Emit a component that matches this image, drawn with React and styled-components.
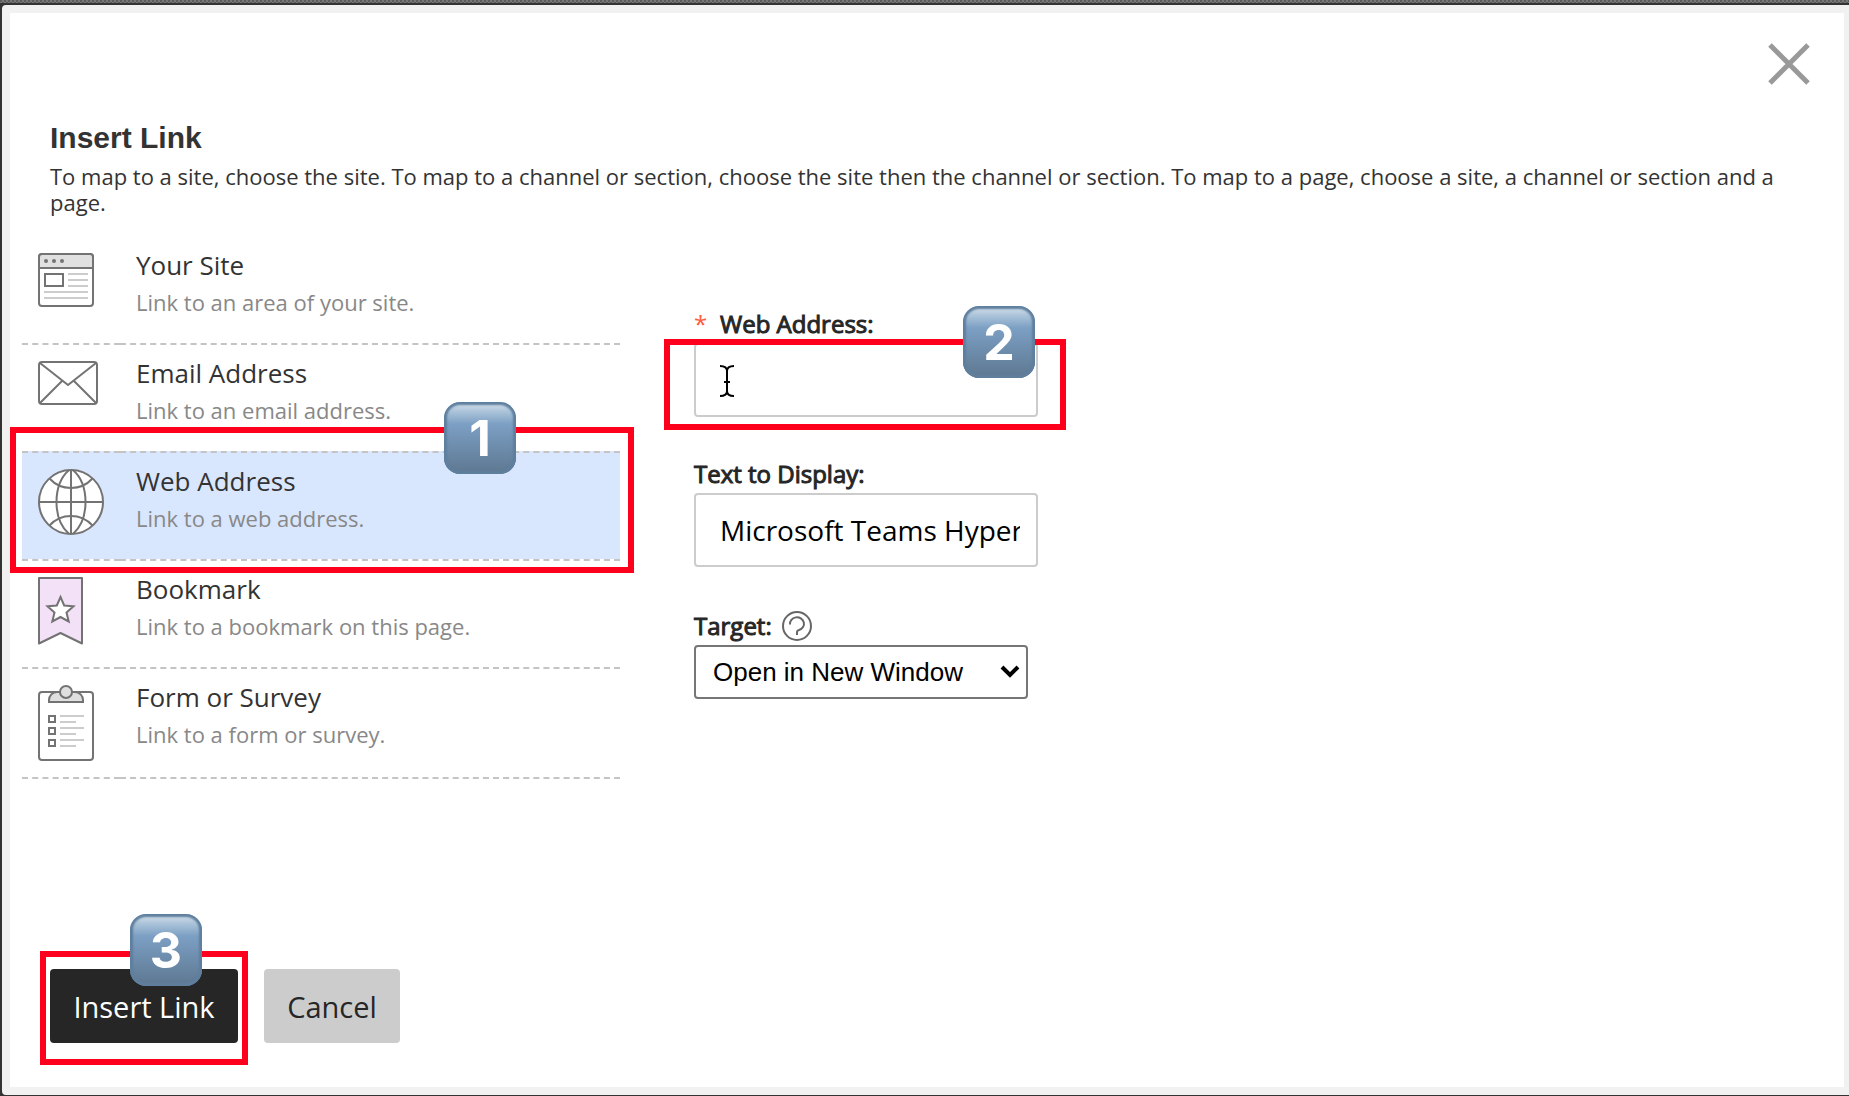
import React, { useState } from 'react';
import styled, { createGlobalStyle } from 'styled-components';

const GlobalStyle = createGlobalStyle`
  * {
    box-sizing: border-box;
  }

  body {
    margin: 0;
    background-color: #333;
    font-family: 'Open Sans', 'Liberation Sans', sans-serif;
    color: #333;
  }

  button,
  input {
    font-family: inherit;
  }
`;

const Page = styled.div`
  display: flex;
  flex-direction: column;
  min-height: 100vh;
  padding: 0 0 1px 2px;
`;

const Backdrop = styled.div`
  height: 3px;
  margin: 0 0 2px -2px;
  background: repeating-conic-gradient(#777 0 25%, #5c5c5c 0 50%) 0 0 / 4px 4px;
`;

const Dialog = styled.section`
  flex: 1;
  display: flex;
  flex-direction: column;
  border: solid #f1f1f1;
  border-width: 8px 5px 8px 8px;
  border-radius: 4px 0 0 4px;
  background: #fff;
`;

const Header = styled.header`
  display: flex;
  flex-direction: column;
  padding: 30px 34px 0 40px;
`;

const CloseButton = styled.button`
  align-self: flex-end;
  display: flex;
  padding: 0;
  border: 0;
  background: none;
  cursor: pointer;
`;

const Title = styled.h1`
  margin: 35px 0 7px;
  font-family: 'Liberation Sans', Arial, sans-serif;
  font-size: 30px;
  line-height: 36px;
  font-weight: 700;
`;

const Description = styled.p`
  margin: 0;
  font-size: 22px;
  line-height: 26px;
`;

const Content = styled.div`
  display: grid;
  grid-template-columns: 598px 344px;
  column-gap: 74px;
  padding: 20px 12px 0;
`;

const LinkTypes = styled.ul`
  margin: 0;
  padding: 0;
  list-style: none;
`;

const LinkTypeItem = styled.li`
  position: relative;
`;

const LinkTypeButton = styled.button`
  display: grid;
  grid-template-columns: 98px 1fr;
  width: 100%;
  min-height: 108px;
  padding: 0;
  border: 0;
  color: inherit;
  text-align: left;
  cursor: pointer;
  background: ${props => (props.$selected ? '#d9e7fe' : 'transparent')};
`;

const Cell = styled.span`
  display: flex;
  flex-direction: column;
  border-top: 2px dashed ${props => (props.$first ? 'transparent' : '#c4c4c4')};
  border-bottom: ${props => (props.$last ? '2px dashed #c4c4c4' : '0')};
`;

const IconCell = styled(Cell)`
  padding: 16px;

  svg {
    flex: none;
  }
`;

const TextCell = styled(Cell)`
  gap: 4px;
  padding: 10px 16px;
`;

const ItemTitle = styled.span`
  font-size: 26px;
  line-height: 36px;
`;

const ItemText = styled.span`
  font-size: 22px;
  line-height: 30px;
  color: #888;
`;

const Form = styled.form`
  display: flex;
  flex-direction: column;
  align-items: flex-start;
  gap: 40px;
  padding-top: 72px;
`;

const Field = styled.div`
  position: relative;
  display: flex;
  flex-direction: column;
  align-items: flex-start;
  gap: 2px;
  width: 100%;
`;

const LabelRow = styled.div`
  display: flex;
  align-items: flex-end;
  gap: 10px;
  min-height: ${props => (props.$tall ? '36px' : '34px')};
`;

const Label = styled.label`
  font-size: 24px;
  line-height: 34px;
  color: #262626;
  -webkit-text-stroke: 1px #262626;
`;

const Required = styled.span`
  width: 16px;
  font-size: 24px;
  line-height: 34px;
  color: #ff5a3c;
`;

const TextInput = styled.input`
  width: 100%;
  height: 74px;
  padding: 0 16px 0 24px;
  border: 2px solid #ccc;
  border-radius: 4px;
  background: #fff;
  color: #000;
  font-size: 28px;
`;

const HelpButton = styled.button`
  display: flex;
  padding: 0 0 2px;
  border: 0;
  background: none;
`;

const SelectWrap = styled.div`
  position: relative;
`;

const Select = styled.select`
  width: 334px;
  height: 54px;
  padding: 0 48px 0 17px;
  border: 2px solid #767676;
  border-radius: 4px;
  appearance: none;
  background: #fff;
  color: #000;
  font-family: 'Liberation Sans', Arial, sans-serif;
  font-size: 26px;
`;

const Chevron = styled.svg`
  position: absolute;
  top: 20px;
  right: 8px;
  pointer-events: none;
`;

const Pointer = styled.svg`
  position: absolute;
  top: 57px;
  left: 25px;
`;

const Footer = styled.footer`
  display: flex;
  gap: 26px;
  margin-top: auto;
  padding: 40px 40px 44px;
`;

const ButtonWrap = styled.div`
  position: relative;
`;

const Button = styled.button`
  height: 74px;
  min-width: ${props => (props.$primary ? '188px' : '136px')};
  padding: 0 20px;
  border: 0;
  border-radius: 4px;
  background: ${props => (props.$primary ? '#262626' : '#ccc')};
  color: ${props => (props.$primary ? '#fff' : '#262626')};
  font-size: 29px;
  cursor: pointer;
`;

const Highlight = styled.div`
  position: absolute;
  z-index: 1;
  inset: ${props => props.$inset};
  border: 6px solid #ff001c;
  pointer-events: none;
`;

const Badge = styled.span`
  position: absolute;
  top: ${props => props.$top};
  left: ${props => props.$left};
  display: flex;
  align-items: center;
  justify-content: center;
  width: 72px;
  height: 72px;
  border-radius: 16px;
  background: linear-gradient(#c9d9e6 3px, #a9c2d8 10px, #7c9fc4 22px, #5d7790);
  box-shadow: inset 0 0 2px 3px #5f7f9e;
  color: #fff;
  font-family: Inter, 'Liberation Sans', sans-serif;
  font-size: 50px;
  line-height: 72px;
  font-weight: 700;
`;

const Callout = ({ number, inset, top, left }) => (
  <Highlight $inset={inset}>
    <Badge $top={top} $left={left}>
      {number}
    </Badge>
  </Highlight>
);

const stroke = { fill: 'none', stroke: '#737373', strokeWidth: 2 };

const SiteIcon = () => (
  <svg width="56" height="54" {...stroke}>
    <rect x="1" y="1" width="54" height="52" rx="3" fill="#fff" />
    <path d="M1 15V4a3 3 0 0 1 3-3h48a3 3 0 0 1 3 3v11z" fill="#e0e0e0" />
    <g fill="#737373" stroke="none">
      <circle cx="8" cy="8" r="2" />
      <circle cx="16" cy="8" r="2" />
      <circle cx="24" cy="8" r="2" />
    </g>
    <path d="M30 21h20M30 27h20M30 33h20M6 39h44M6 45h44" stroke="#ccc" />
    <rect x="7" y="21" width="18" height="12" />
  </svg>
);

const EmailIcon = () => (
  <svg width="60" height="44" {...stroke}>
    <rect x="1" y="1" width="58" height="42" rx="3" fill="#fff" />
    <path d="M2 2l28 22L58 2M24 20L2 42M36 20l22 22" />
  </svg>
);

const GlobeIcon = () => (
  <svg width="66" height="66" {...stroke}>
    <circle cx="33" cy="33" r="32" fill="#fff" />
    <path d="M33 1v64M1 33h64" />
    <path d="M31 1C22 9 18.500 20 18.500 33S22 57 31 65M35 1c9 8 12.500 19 12.500 32S44 57 35 65" />
    <path d="M11.500 9.500C17 15.500 24 19 33 19s16-3.500 21.500-9.500M11.500 56.500C17 50.500 24 47 33 47s16 3.500 21.500 9.500" />
  </svg>
);

const BookmarkIcon = () => (
  <svg width="45" height="68" strokeLinejoin="round" {...stroke}>
    <path d="M1 1h43v65.500L22.500 56 1 66.500z" fill="#f3e1f8" />
    <path
      d="M22.500 20l3.700 8.500 9.300.8-7 6.200 2.200 9-8.200-4.500-8.200 4.500 2.200-9-7-6.200 9.300-.8z"
      fill="#fff"
      strokeLinejoin="miter"
    />
  </svg>
);

const FormIcon = () => (
  <svg width="56" height="76" {...stroke}>
    <rect x="1" y="7" width="54" height="68" rx="3" fill="#fff" />
    <path d="M11 17v-2a8 8 0 0 1 8-8h18a8 8 0 0 1 8 8v2z" fill="#e0e0e0" />
    <circle cx="28" cy="7" r="6" fill="#e0e0e0" />
    <path d="M11 31h6v6h-6zM11 43h6v6h-6zM11 55h6v6h-6z" />
    <path
      d="M22 31h24M22 37h16M22 43h24M22 49h16M22 55h24M22 61h16"
      stroke="#ccc"
    />
  </svg>
);

const linkTypes = [
  {
    id: 'site',
    title: 'Your Site',
    text: 'Link to an area of your site.',
    Icon: SiteIcon
  },
  {
    id: 'email',
    title: 'Email Address',
    text: 'Link to an email address.',
    Icon: EmailIcon
  },
  {
    id: 'web',
    title: 'Web Address',
    text: 'Link to a web address.',
    Icon: GlobeIcon
  },
  {
    id: 'bookmark',
    title: 'Bookmark',
    text: 'Link to a bookmark on this page.',
    Icon: BookmarkIcon
  },
  {
    id: 'form',
    title: 'Form or Survey',
    text: 'Link to a form or survey.',
    Icon: FormIcon
  }
];

const App = () => {
  const [selected, setSelected] = useState('web');
  const [address, setAddress] = useState('');
  const [text, setText] = useState('Microsoft Teams Hyperlink');

  return (
    <Page>
      <GlobalStyle />
      <Backdrop />
      <Dialog role="dialog" aria-labelledby="dialog-title">
        <Header>
          <CloseButton type="button" aria-label="Close">
            <svg width="42" height="42" stroke="#999" strokeWidth="5">
              <path d="M2 2l38 38M40 2L2 40" />
            </svg>
          </CloseButton>
          <Title id="dialog-title">Insert Link</Title>
          <Description>
            To map to a site, choose the site. To map to a channel or section,
            choose the site then the channel or section. To map to a page,
            choose a site, a channel or section and a page.
          </Description>
        </Header>
        <Content>
          <LinkTypes>
            {linkTypes.map(({ id, title, text: hint, Icon }, i) => {
              const edges = {
                $first: i === 0,
                $last: i === linkTypes.length - 1
              };
              return (
                <LinkTypeItem key={id}>
                  <LinkTypeButton
                    type="button"
                    $selected={id === selected}
                    aria-pressed={id === selected}
                    onClick={() => setSelected(id)}
                  >
                    <IconCell {...edges}>
                      <Icon />
                    </IconCell>
                    <TextCell {...edges}>
                      <ItemTitle>{title}</ItemTitle>
                      <ItemText>{hint}</ItemText>
                    </TextCell>
                  </LinkTypeButton>
                  {id === 'web' && (
                    <Callout
                      number="1"
                      inset="-24px -14px -14px -12px"
                      top="-31px"
                      left="428px"
                    />
                  )}
                </LinkTypeItem>
              );
            })}
          </LinkTypes>
          <Form id="link-form" onSubmit={e => e.preventDefault()}>
            <Field>
              <LabelRow>
                <Required aria-hidden="true">*</Required>
                <Label htmlFor="address">Web Address:</Label>
              </LabelRow>
              <TextInput
                id="address"
                required
                value={address}
                onChange={e => setAddress(e.target.value)}
              />
              <Pointer width="16" height="34" fill="none" stroke="#000" strokeWidth="2">
                <path d="M1 2c4 0 7 1 7 5v20c0 4-3 5-7 5M15 2c-4 0-7 1-7 5v20c0 4 3 5 7 5M5 18h6" />
              </Pointer>
              <Callout
                number="2"
                inset="32px -28px -13px -30px"
                top="-39px"
                left="293px"
              />
            </Field>
            <Field>
              <LabelRow>
                <Label htmlFor="display">Text to Display:</Label>
              </LabelRow>
              <TextInput
                id="display"
                value={text}
                onChange={e => setText(e.target.value)}
              />
            </Field>
            <Field>
              <LabelRow $tall>
                <Label htmlFor="target">Target:</Label>
                <HelpButton type="button" aria-label="Help">
                  <svg width="30" height="30" fill="none" stroke="#666" strokeWidth="2">
                    <circle cx="15" cy="15" r="14" />
                    <path d="M8 13.500a7 6.500 0 1 1 9 5.500q-2 .5-2 2v3" />
                  </svg>
                </HelpButton>
              </LabelRow>
              <SelectWrap>
                <Select id="target" defaultValue="new">
                  <option value="new">Open in New Window</option>
                  <option value="same">Open in Same Window</option>
                </Select>
                <Chevron width="20" height="14" fill="none" stroke="#000" strokeWidth="4">
                  <path d="M2 2l8 8 8-8" />
                </Chevron>
              </SelectWrap>
            </Field>
          </Form>
        </Content>
        <Footer>
          <ButtonWrap>
            <Button type="submit" form="link-form" $primary>
              Insert Link
            </Button>
            <Callout
              number="3"
              inset="-18px -10px -22px -10px"
              top="-43px"
              left="84px"
            />
          </ButtonWrap>
          <Button type="button">Cancel</Button>
        </Footer>
      </Dialog>
    </Page>
  );
};

export default App;
